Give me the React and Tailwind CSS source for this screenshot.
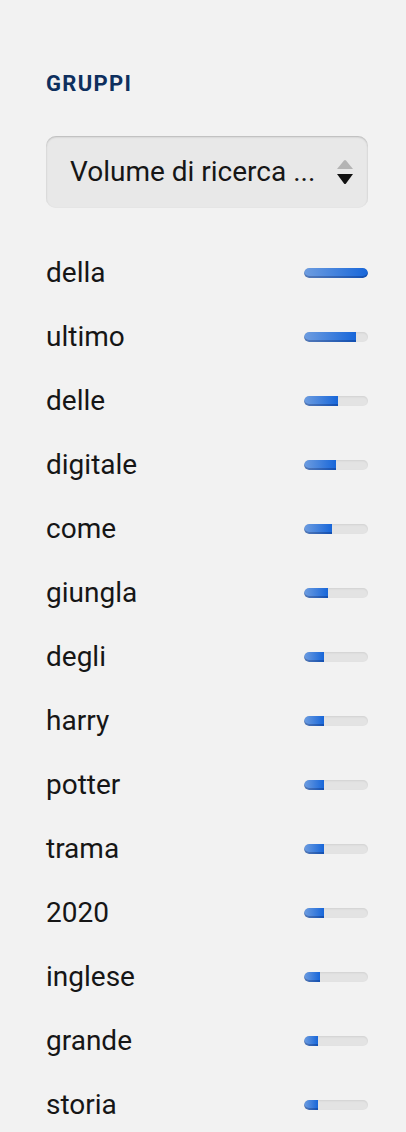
import React from "react";

const rows = [
  ["della", 64],
  ["ultimo", 52],
  ["delle", 34],
  ["digitale", 32],
  ["come", 28],
  ["giungla", 24],
  ["degli", 20],
  ["harry", 20],
  ["potter", 20],
  ["trama", 20],
  ["2020", 20],
  ["inglese", 16],
  ["grande", 14],
  ["storia", 14],
];

function Bar({ w }) {
  const full = w >= 64;
  return (
    <div className="relative w-[64px] h-[10px] rounded-full bg-[#e3e3e3] shadow-[inset_0_1px_2px_rgba(0,0,0,0.08)] overflow-hidden">
      <div
        className={
          "h-full bg-[linear-gradient(to_right,#6e9de0,#1766d9)] shadow-[inset_0_-2px_0_rgba(0,0,40,0.22)] " +
          (full ? "rounded-full" : "rounded-l-full")
        }
        style={{ width: w }}
      />
    </div>
  );
}

export default function App() {
  return (
    <div
      className="min-h-[1132px] bg-[#f2f2f2] pl-[46px] pr-[38px] pt-[71px]"
      style={{ fontFamily: "Roboto, 'Liberation Sans', sans-serif" }}
    >
      <h2 className="text-[22px] leading-[26px] font-bold text-[#0e2f5e] tracking-[0.06em]">GRUPPI</h2>
      <div className="mt-[39px] h-[72px] rounded-[10px] bg-[#e8e8e8] shadow-[inset_0_1px_2px_rgba(0,0,0,0.22)] flex items-center justify-between pl-[24px] pr-[14px]">
        <span className="text-[28px] text-[#161616]">Volume di ricerca ...</span>
        <svg width="18" height="26" viewBox="0 0 18 26">
          <path d="M1 10 L8 1.5 Q9 0.5 10 1.5 L17 10 Z" fill="#b4b4b4" />
          <path d="M1 15 L17 15 L10 24.5 Q9 25.5 8 24.5 Z" fill="#111" />
        </svg>
      </div>
      <div className="mt-[33px] flex flex-col">
        {rows.map(([t, w]) => (
          <div key={t} className="h-[64px] flex items-center justify-between">
            <span className="text-[28px] text-[#161616]">{t}</span>
            <Bar w={w} />
          </div>
        ))}
      </div>
    </div>
  );
}
